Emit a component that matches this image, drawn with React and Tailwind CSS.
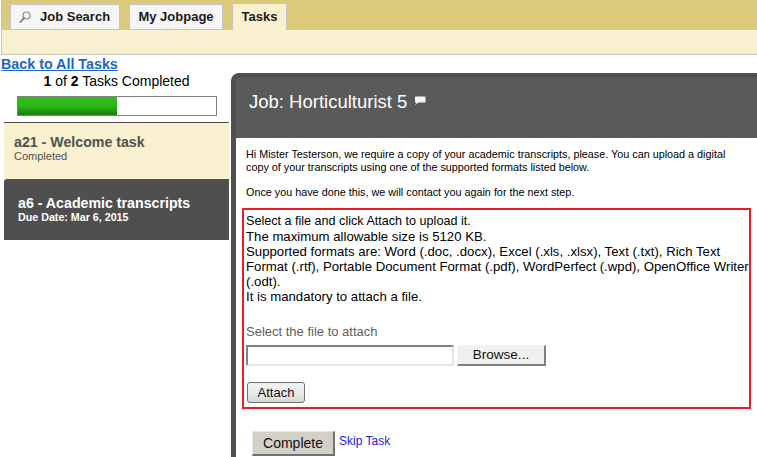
import React from "react";

function SearchIcon() {
  return (
    <svg width="14" height="14" viewBox="0 0 14 14" fill="none" className="mr-[8px] shrink-0">
      <circle cx="8.5" cy="5.5" r="3.5" stroke="#8a8a8a" strokeWidth="1.2" />
      <path d="M6 8 L2.5 12" stroke="#777" strokeWidth="1.8" strokeLinecap="round" />
    </svg>
  );
}

function Tab({ children, className = "" }) {
  return (
    <div className={`flex items-center whitespace-nowrap border-t border-x border-[#c4c4c4] text-[13px] font-bold text-[#1a1a1a] ${className}`}>
      {children}
    </div>
  );
}

export default function App() {
  return (
    <div className="w-[757px] h-[457px] overflow-hidden bg-white font-['Liberation_Sans',Arial,sans-serif] text-black">
      <header className="ml-px h-[55px] border-l border-b border-[#c4c4c4] bg-[#f9f0cf] flex flex-col">
        <div className="h-[30px] bg-[#dcc97b] flex items-end gap-[9px] pl-[8px] pt-[3px]">
          <Tab className="w-[110px] h-[26px] bg-[#f6f6f6] pl-[7px] border-b border-b-[#c4c4c4]">
            <SearchIcon />
            Job Search
          </Tab>
          <Tab className="w-[94px] h-[26px] bg-[#f6f6f6] justify-center border-b border-b-[#c4c4c4]">My Jobpage</Tab>
          <Tab className="w-[55px] h-[27px] bg-[#f9f0cf] justify-center">Tasks</Tab>
        </div>
      </header>

      <div className="flex">
        <aside className="w-[231px] shrink-0">
          <a className="block ml-px mt-[1px] w-fit text-[14.3px] leading-[16px] font-bold text-[#1b66c9] underline">Back to All Tasks</a>
          <div className="mt-[1px] ml-[4px] w-[225px] text-center text-[14px] leading-[16px]">
            <b>1</b> of <b>2</b> Tasks Completed
          </div>
          <div className="mt-[7px] ml-[17px] w-[200px] h-[20px] border border-[#808080] bg-white">
            <div className="h-full w-1/2 bg-gradient-to-b from-[#2fbf1a] via-[#2cb818] to-[#157f0c]" />
          </div>
          <div className="mt-[6px] ml-[4px] w-[225px] border-t border-[#4f4f4f]">
            <div className="h-[56px] bg-[#f9f0cf] pl-[10px] pt-[11px]">
              <div className="text-[14.2px] leading-[16px] font-bold text-[#505050]">a21 - Welcome task</div>
              <div className="text-[11px] leading-[13px] text-[#505050]">Completed</div>
            </div>
            <div className="h-[61px] bg-[#4f4f4f] rounded-tl-[3px] pl-[14px] pt-[16px] text-white font-bold">
              <div className="text-[14.2px] leading-[16px]">a6 - Academic transcripts</div>
              <div className="text-[10.7px] leading-[13px]">Due Date: Mar 6, 2015</div>
            </div>
          </div>
        </aside>

        <main className="mt-[18px] w-[526px] h-[400px] bg-[#505050] rounded-tl-[8px] pl-[5px] pt-[5px]">
          <div className="h-[60px] bg-[#5a5a5a] flex items-center pl-[13px] pb-[12px] text-white text-[18.5px]">
            Job: Horticulturist 5
            <svg width="12" height="10" viewBox="0 0 12 10" className="ml-[7px] mb-[2px]">
              <path d="M1.5 0.5 H11 Q11.5 0.5 11.5 1 V6 Q11.5 6.5 11 6.5 H4.5 L0.8 9.2 L2.5 6.5 H1.5 Q1 6.5 1 6 V1 Q1 0.5 1.5 0.5 Z" fill="#f4f4f4" />
            </svg>
          </div>
          <div className="h-[340px] bg-white pl-[6px] pt-[10px]">
            <p className="pl-[4px] w-[500px] text-[10.8px] leading-[13px]">
              Hi Mister Testerson, we require a copy of your academic transcripts, please. You can upload a digital copy of your transcripts using one of the supported formats listed below.
            </p>
            <p className="pl-[4px] mt-[12px] text-[10.8px] leading-[13px]">
              Once you have done this, we will contact you again for the next step.
            </p>
            <section className="mt-[9px] w-[509px] h-[201px] border-2 border-[#ed1c24] pl-[2px] pt-[4px]">
              <div className="text-[13.2px] leading-[15px] w-[503px]">
                <div className="text-[12.6px]">Select a file and click Attach to upload it.</div>
                <div>The maximum allowable size is 5120 KB.</div>
                <div>
                  Supported formats are: Word (.doc, .docx), Excel (.xls, .xlsx), Text (.txt), Rich Text Format (.rtf), Portable Document Format (.pdf), WordPerfect (.wpd), OpenOffice Writer (.odt).
                </div>
                <div>It is mandatory to attach a file.</div>
              </div>
              <div className="mt-[20px] text-[13px] leading-[15px] text-[#606060]">Select the file to attach</div>
              <div className="mt-[6px] flex items-center">
                <div className="w-[208px] h-[21px] border-2 border-t-[#808080] border-l-[#808080] border-r-[#e4e4e4] border-b-[#e4e4e4] bg-white" />
                <div className="ml-[3px] w-[89px] h-[21px] bg-[#f0f0f0] border-t border-l border-[#f4f4f4] border-r-2 border-b-2 border-r-[#808080] border-b-[#808080] flex items-center justify-center text-[13.5px] text-[#111]">
                  Browse...
                </div>
              </div>
              <div className="mt-[16px] ml-[1px] w-[58px] h-[21px] rounded-[3px] border border-[#707070] bg-gradient-to-b from-[#f2f2f2] via-[#ebebeb] to-[#d8d8d8] flex items-center justify-center text-[13px] text-[#111]">
                Attach
              </div>
            </section>
            <div className="mt-[22px] ml-[10px] flex items-start">
              <div className="w-[83px] h-[25px] bg-[#d4d0c8] border-t border-l border-[#e8e6e0] border-r-2 border-b-2 border-r-[#707070] border-b-[#707070] flex items-center justify-center text-[14px] text-[#111]">
                Complete
              </div>
              <a className="ml-[4px] mt-[3px] text-[12px] leading-[14px] text-[#2222dd]">Skip Task</a>
            </div>
          </div>
        </main>
      </div>
    </div>
  );
}
